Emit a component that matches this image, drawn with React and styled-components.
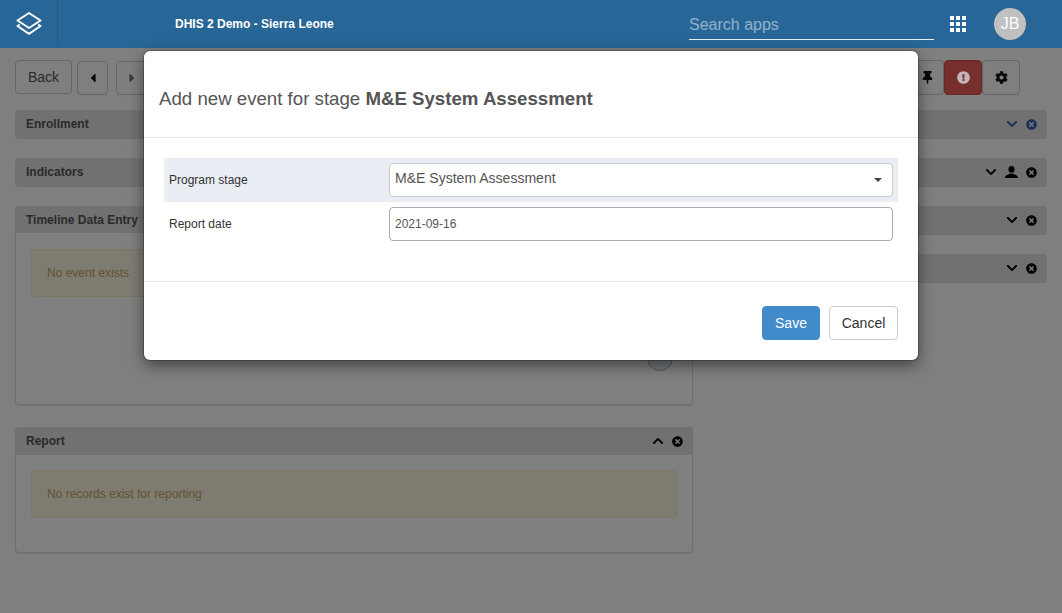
import React from 'react';
import styled, { createGlobalStyle } from 'styled-components';
import { FaChevronDown, FaChevronUp, FaTimesCircle, FaThumbtack, FaExclamationCircle, FaCog, FaCaretLeft, FaCaretRight } from 'react-icons/fa';

const Global = createGlobalStyle`
  html, body { margin: 0; padding: 0; height: 100%; background: #fff; overflow: hidden; }
  body { font-family: "Liberation Sans", Arial, sans-serif; font-size: 12px; color: #333; }
  * { box-sizing: border-box; }
`;

const Shell = styled.div`height: 613px; position: relative; overflow: hidden;`;

const Header = styled.header`
  position: relative; z-index: 30; height: 48px; background: #276696; color: #fff;
  display: flex; align-items: center;
`;
const LogoCell = styled.div`
  width: 58px; height: 44px; align-self: flex-start; border-right: 1px solid #215a87;
  display: flex; align-items: center; justify-content: center; padding-top: 2px;
`;
const InstanceName = styled.div`
  margin-left: 117px; width: 514px; font-size: 12px; font-weight: 700;
`;
const SearchBox = styled.div`
  width: 245px; height: 32px; border-bottom: 1px solid #e4eef5; font-size: 16px;
  color: rgba(255,255,255,.5); display: flex; align-items: center; padding-top: 3px;
`;
const Waffle = styled.div`
  width: 16px; margin-left: 16px; display: grid; grid-template-columns: repeat(3, 4px); gap: 2px;
`;
const Dot = styled.span`width: 4px; height: 4px; background: #fff;`;
const Avatar = styled.div`
  width: 32px; height: 32px; border-radius: 50%; background: #c0c0c0; margin-left: 28px;
  display: flex; align-items: center; justify-content: center; font-size: 16px; color: #fff;
`;

const Page = styled.main`padding: 12px 15px 0;`;
const Toolbar = styled.div`display: flex; align-items: flex-start; height: 50px;`;
const ToolGroup = styled.div`display: flex; margin-left: ${p => p.$left || 0}px; margin-top: ${p => p.$top || 0}px;`;
const Spacer = styled.div`flex: 1;`;
const ToolButton = styled.button`
  width: ${p => p.$w}px; height: ${p => p.$h || 35}px; margin-left: ${p => p.$ml || 0}px;
  border: 1px solid ${p => p.$danger ? '#d04c48' : '#c8c8c8'}; border-radius: 4px;
  background: ${p => p.$danger ? '#ec5f5b' : '#fff'}; color: ${p => p.$muted ? '#777' : '#555'};
  font: 14px "Liberation Sans", Arial, sans-serif; padding: 0;
  display: inline-flex; align-items: center; justify-content: center;
`;
const AlertGlyph = styled.span`
  position: relative; z-index: 25; display: inline-flex; color: #c2b6b6;
`;
const Columns = styled.div`display: grid; grid-template-columns: 678px 339px; gap: 15px;`;
const Column = styled.div`display: flex; flex-direction: column;`;

const Panel = styled.section`
  margin-bottom: ${p => p.$mb}px; border-radius: 4px; background: #fff;
  border: ${p => p.$open ? '1px solid #ddd' : 'none'};
  box-shadow: ${p => p.$open ? '0 1px 1px rgba(0,0,0,.1)' : 'none'};
  height: ${p => p.$h}px;
`;
const PanelHead = styled.div`
  height: ${p => p.$h || 29}px; background: #e2e2e2; border-radius: 4px; padding: 0 10px 0 11px;
  display: flex; align-items: center; justify-content: ${p => p.$end ? 'flex-end' : 'space-between'};
  font-weight: 700; color: #555;
  margin: ${p => p.$inset ? '-1px -1px 0' : 0};
  border-bottom-left-radius: ${p => p.$inset ? 0 : 4}px; border-bottom-right-radius: ${p => p.$inset ? 0 : 4}px;
`;
const PanelTitle = styled.span`padding-bottom: ${p => p.$lift ? 2 : 0}px;`;
const HeadIcons = styled.div`
  display: flex; align-items: center; gap: 8px; color: ${p => p.$blue ? '#3a62b0' : '#000'};
  padding-bottom: ${p => p.$lift ? 1 : 0}px;
`;
const Alert = styled.div`
  margin: ${p => p.$mt}px 15px 0; height: 48px; padding: 0 15px; display: flex; align-items: center;
  background: #fcf8e3; border: 1px solid #faebcc; border-radius: 4px; color: #c4a468;
`;
const RoundAction = styled.div`
  position: absolute; left: 631px; top: 96px; width: 26px; height: 26px; border-radius: 50%;
  background: #e6f0f6; border: 1px solid #9fb4c4;
`;
const TimelineBody = styled.div`position: relative; height: 171px;`;

const Overlay = styled.div`position: absolute; inset: 48px 0 0 0; background: rgba(0,0,0,.5); z-index: 20;`;
const Modal = styled.div`
  position: absolute; left: 144px; top: 51px; width: 774px; height: 309px; z-index: 40; background: #fff;
  border-radius: 6px; box-shadow: 0 0 0 1px rgba(0,0,0,.2), 0 5px 15px rgba(0,0,0,.5); display: flex; flex-direction: column;
`;
const ModalTitle = styled.div`
  height: 87px; padding: 38px 15px 0; border-bottom: 1px solid #e5e5e5; font-size: 18.66px; color: #555;
  line-height: 20px;
`;
const ModalBody = styled.div`height: 144px; padding: 20px 20px 0; border-bottom: 1px solid #e5e5e5;`;
const FormRow = styled.div`
  display: grid; grid-template-columns: 220px 1fr; align-items: center; padding: 5px;
  height: 44px; background: ${p => p.$active ? '#e9eef5' : 'transparent'}; color: #333;
`;
const SelectBox = styled.div`
  height: 34px; border: 1px solid #ccc; border-radius: 4px; background: #fff; padding: 0 10px 0 5px;
  display: flex; align-items: center; justify-content: space-between; font-size: 14.04px; color: #555;
`;
const SelectValue = styled.span`padding-bottom: 5px;`;
const SelectCaret = styled.span`
  width: 0; height: 0; border-top: 4px solid #444; border-left: 4px solid transparent; border-right: 4px solid transparent;
`;
const DateInput = styled.div`
  height: 34px; border: 1px solid #aaa; border-radius: 4px; background: #fff; padding: 0 5px;
  display: flex; align-items: center; font-size: 12px; color: #555;
`;
const ModalFooter = styled.div`flex: 1; display: flex; justify-content: flex-end; align-items: flex-start; gap: 9px; padding: 24px 20px 0;`;
const FootButton = styled.button`
  height: 34px; width: ${p => p.$w}px; border-radius: 4px; font: 14px "Liberation Sans", Arial, sans-serif;
  border: 1px solid ${p => p.$primary ? '#428bca' : '#ccc'};
  background: ${p => p.$primary ? '#428bca' : '#fff'}; color: ${p => p.$primary ? '#fff' : '#333'};
`;

const Logo = () => (
  <svg width="26" height="24" viewBox="0 0 26 24" fill="none" stroke="#fff" strokeWidth="2" strokeLinejoin="round">
    <path d="M13 2 24.5 9.5 13 17 1.5 9.5Z" />
    <path d="M3.8 13.5 1.5 15 13 22.8 24.5 15 22.2 13.5" />
  </svg>
);

const UserGlyph = () => (
  <svg width="13" height="12" viewBox="0 0 13 12" fill="currentColor">
    <ellipse cx="6.5" cy="3.4" rx="3" ry="3.4" />
    <path d="M0 12C0 9.4 3 8.8 4.6 7.8L8.4 7.8C10 8.8 13 9.4 13 12Z" />
  </svg>
);

const Controls = ({ user, blue, up, lift }) => (
  <HeadIcons $blue={blue} $lift={lift}>
    {up ? <FaChevronUp size={12} /> : <FaChevronDown size={12} />}
    {user && <UserGlyph />}
    <FaTimesCircle size={11} />
  </HeadIcons>
);

export default function App() {
  return (
    <Shell>
      <Global />
      <Header>
        <LogoCell><Logo /></LogoCell>
        <InstanceName>DHIS 2 Demo - Sierra Leone</InstanceName>
        <SearchBox>Search apps</SearchBox>
        <Waffle>{Array.from({ length: 9 }, (_, i) => <Dot key={i} />)}</Waffle>
        <Avatar>JB</Avatar>
      </Header>
      <Page>
        <Toolbar>
          <ToolButton $w={57} $h={34}>Back</ToolButton>
          <ToolGroup $left={5} $top={1}>
            <ToolButton $w={31} $h={34}><FaCaretLeft size={14} color="#111" /></ToolButton>
            <ToolButton $w={31} $h={34} $ml={8} $muted><FaCaretRight size={14} /></ToolButton>
          </ToolGroup>
          <Spacer />
          <ToolGroup>
            <ToolButton $w={34}><FaThumbtack size={13} color="#111" /></ToolButton>
            <ToolButton $w={38} $danger><AlertGlyph><FaExclamationCircle size={13} /></AlertGlyph></ToolButton>
            <ToolButton $w={38}><FaCog size={13} color="#111" /></ToolButton>
          </ToolGroup>
          <ToolGroup $left={27} />
        </Toolbar>
        <Columns>
          <Column>
            <Panel $mb={19} $h={29}><PanelHead><PanelTitle $lift>Enrollment</PanelTitle></PanelHead></Panel>
            <Panel $mb={19} $h={29}><PanelHead><PanelTitle $lift>Indicators</PanelTitle></PanelHead></Panel>
            <Panel $mb={22} $h={199} $open>
              <PanelHead $inset $h={27}><PanelTitle>Timeline Data Entry</PanelTitle></PanelHead>
              <TimelineBody>
                <Alert $mt={16}>No event exists</Alert>
                <RoundAction />
              </TimelineBody>
            </Panel>
            <Panel $mb={0} $h={126} $open>
              <PanelHead $inset $h={28}>
                <PanelTitle>Report</PanelTitle>
                <Controls up />
              </PanelHead>
              <Alert $mt={15}>No records exist for reporting</Alert>
            </Panel>
          </Column>
          <Column>
            <Panel $mb={19} $h={29}><PanelHead $end><Controls blue lift /></PanelHead></Panel>
            <Panel $mb={19} $h={29}><PanelHead $end><Controls user lift /></PanelHead></Panel>
            <Panel $mb={19} $h={29}><PanelHead $end><Controls lift /></PanelHead></Panel>
            <Panel $mb={0} $h={29}><PanelHead $end><Controls lift /></PanelHead></Panel>
          </Column>
        </Columns>
      </Page>
      <Overlay />
      <Modal>
        <ModalTitle>Add new event for stage <strong>M&amp;E System Assessment</strong></ModalTitle>
        <ModalBody>
          <FormRow $active>
            <span>Program stage</span>
            <SelectBox><SelectValue>M&amp;E System Assessment</SelectValue><SelectCaret /></SelectBox>
          </FormRow>
          <FormRow>
            <span>Report date</span>
            <DateInput>2021-09-16</DateInput>
          </FormRow>
        </ModalBody>
        <ModalFooter>
          <FootButton $primary $w={58}>Save</FootButton>
          <FootButton $w={69}>Cancel</FootButton>
        </ModalFooter>
      </Modal>
    </Shell>
  );
}
